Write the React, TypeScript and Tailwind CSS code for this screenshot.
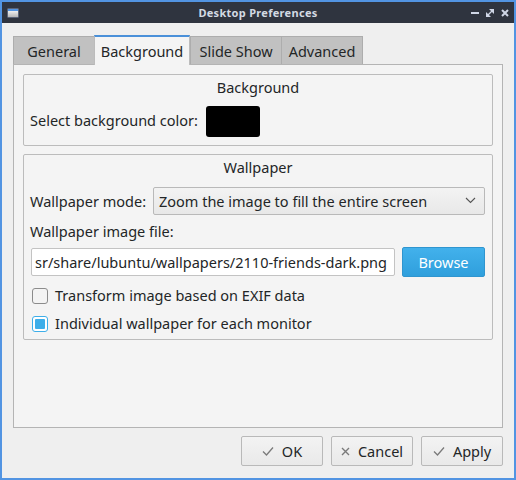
const Check = ({ className = '' }: { className?: string }) => (
  <svg width="12" height="10" viewBox="0 0 12 10" className={className}>
    <path d="M1 5.5 L4.5 9 L11 1.5" fill="none" stroke="currentColor" strokeWidth="1.3" />
  </svg>
);

const Cross = () => (
  <svg width="9" height="9" viewBox="0 0 9 9">
    <path d="M1 1 L8 8 M8 1 L1 8" fill="none" stroke="currentColor" strokeWidth="1.4" />
  </svg>
);

const TitleBar = () => (
  <div className="relative flex h-[21px] items-center bg-[#2f343f]">
    <div className="ml-[5px] flex h-[10px] w-[12px] flex-col overflow-hidden rounded-[1px] border border-[#5b6478]">
      <div className="h-[2px] bg-[#5294e2]" />
      <div className="flex-1 bg-gradient-to-b from-[#f0f0f0] to-[#b8b8b8]" />
    </div>
    <div className="absolute inset-0 flex items-center justify-center text-[11px] font-bold tracking-[0.3px] text-[#d3dae3]">
      Desktop Preferences
    </div>
    <div className="ml-auto mr-[5px] flex items-center gap-[7px] text-[#cfd6e6]">
      <div className="h-[2px] w-[8px] bg-[#cfd6e6]" />
      <svg width="8" height="8" viewBox="0 0 8 8">
        <path d="M3 0 H8 V5 Z" fill="currentColor" />
        <path d="M0 3 V8 H5 Z" fill="currentColor" />
        <path d="M6 2 L2 6" stroke="currentColor" strokeWidth="1.2" />
      </svg>
      <svg width="8" height="8" viewBox="0 0 8 8">
        <path d="M1 1 L7 7 M7 1 L1 7" fill="none" stroke="currentColor" strokeWidth="2" />
      </svg>
    </div>
  </div>
);

const tabs = [
  { name: 'General', w: 'w-[81px]' },
  { name: 'Background', w: 'w-[96px]' },
  { name: 'Slide Show', w: 'w-[91px]' },
  { name: 'Advanced', w: 'w-[82px]' },
];

const GroupBox = ({ title, children, className = '' }: { title: string; children: React.ReactNode; className?: string }) => (
  <div className={`flex flex-col rounded-[2px] border border-[#bcbcbc] ${className}`}>
    <div className="mt-[3px] flex h-[18px] items-center justify-center">{title}</div>
    {children}
  </div>
);

const DialogButton = ({ icon, label }: { icon: React.ReactNode; label: string }) => (
  <button className="flex h-[30px] w-[82px] items-center justify-center gap-[8px] rounded-[2px] border border-[#b9b9b9] bg-gradient-to-b from-[#f3f3f3] to-[#e9e9e9] text-[#232627]">
    <span className="text-[#7a7a7a]">{icon}</span>
    {label}
  </button>
);

export default function App() {
  return (
    <div className="flex h-[480px] w-[516px] flex-col bg-[#5294e2] p-[2px] font-['Noto_Sans',sans-serif] text-[14.5px] leading-[18px] text-[#232627]">
      <TitleBar />
      <div className="flex flex-1 flex-col bg-[#efefef] px-[11px] pt-[12px] pb-[12px]">
        <div className="flex h-[29px] items-end">
          {tabs.map((t) =>
            t.name === 'Background' ? (
              <div
                key={t.name}
                className={`relative z-10 -mb-px flex h-[30px] ${t.w} items-center justify-center border-x border-t-2 border-x-[#bcbcbc] border-t-[#4a90d9] bg-[#f4f4f4]`}
              >
                {t.name}
              </div>
            ) : (
              <div
                key={t.name}
                className={`flex h-[28px] ${t.w} items-center justify-center border-l border-t border-[#adadad] bg-[#c1c1c1] last:border-r`}
              >
                {t.name}
              </div>
            )
          )}
        </div>
        <div className="flex h-[364px] flex-col gap-[8px] border border-[#b4b4b4] bg-[#f4f4f4] px-[9px] pt-[9px]">
          <GroupBox title="Background" className="h-[72px]">
            <div className="mt-[10px] flex items-center pl-[6px]">
              <span className="pb-[3px]">Select background color:</span>
              <div className="ml-[8px] h-[31px] w-[54px] rounded-[3px] bg-black" />
            </div>
          </GroupBox>
          <GroupBox title="Wallpaper" className="h-[186px]">
            <div className="mt-[11px] flex items-center pl-[6px] pr-[7px]">
              <span className="w-[123px] pb-[1px]">Wallpaper mode:</span>
              <div className="flex h-[28px] flex-1 items-center rounded-[2px] border border-[#b9b9b9] bg-gradient-to-b from-[#f3f3f3] to-[#e8e8e8] pb-[1px] pl-[5px] pr-[8px]">
                <span className="flex-1">Zoom the image to fill the entire screen</span>
                <svg width="11" height="7" viewBox="0 0 11 7">
                  <path d="M1 1 L5.5 5.5 L10 1" fill="none" stroke="#555" strokeWidth="1.1" />
                </svg>
              </div>
            </div>
            <div className="mt-[8px] flex h-[16px] items-center pl-[6px]">Wallpaper image file:</div>
            <div className="mt-[8px] flex items-center pl-[7px] pr-[7px]">
              <div className="flex h-[28px] w-[364px] items-center overflow-hidden whitespace-nowrap rounded-[2px] border border-[#c3c3c3] bg-white pl-[5px]">
                <span className="-ml-[2px]">sr/share/lubuntu/wallpapers/2110-friends-dark.png</span>
              </div>
              <button className="ml-auto flex h-[30px] w-[83px] items-center justify-center rounded-[2px] border border-[#2f95cf] bg-gradient-to-b from-[#42b1ec] to-[#2f9fdc] text-white">
                Browse
              </button>
            </div>
            <div className="mt-[9px] flex items-center gap-[7px] pl-[8px]">
              <div className="h-[16px] w-[16px] rounded-[3px] border border-[#8c8c8c] bg-[#f4f4f4]" />
              <span className="pb-[1px]">Transform image based on EXIF data</span>
            </div>
            <div className="mt-[9px] flex items-center gap-[7px] pl-[8px]">
              <div className="h-[16px] w-[16px] rounded-[3px] border border-[#3daee9] bg-white p-[2px]">
                <div className="h-full w-full rounded-[1px] bg-[#3daee9]" />
              </div>
              <span className="pb-[1px]">Individual wallpaper for each monitor</span>
            </div>
          </GroupBox>
        </div>
        <div className="mt-[8px] flex justify-end gap-[8px] pr-0">
          <DialogButton icon={<Check />} label="OK" />
          <DialogButton icon={<Cross />} label="Cancel" />
          <DialogButton icon={<Check />} label="Apply" />
        </div>
      </div>
    </div>
  );
}
